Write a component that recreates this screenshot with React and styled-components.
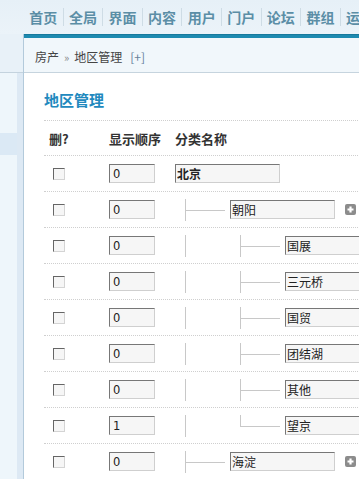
import React from 'react';
import styled, { createGlobalStyle } from 'styled-components';

const GlobalStyle = createGlobalStyle`
    html, body {
        margin: 0;
        padding: 0;
        background: #fff;
    }
    body {
        font-family: "Noto Sans CJK SC", "DejaVu Sans", sans-serif;
        font-size: 12px;
        color: #333;
        overflow: hidden;
    }
`;

const Page = styled.div`
    display: grid;
    grid-template-rows: 34px 1fr;
    min-height: 100vh;
`;

const Nav = styled.div`
    display: flex;
    align-items: center;
    padding-left: 24px;
    background: linear-gradient(#e6f0f7, #ebf3f9);
    white-space: nowrap;
    overflow: hidden;
`;

const NavItem = styled.a`
    flex: none;
    padding: 0 5.3px;
    font-size: 14px;
    font-weight: bold;
    line-height: 18px;
    color: #5b8ea6;
    text-decoration: none;
    & + & {
        border-left: 1px solid #cedce5;
    }
`;

const Body = styled.div`
    display: flex;
`;

const Sidebar = styled.div`
    width: 23px;
    flex: none;
    display: flex;
    flex-direction: column;
    border-right: 1px solid #b3cadb;
    background: #eef6fb;
`;

const SideHead = styled.div`
    height: 39px;
    box-sizing: border-box;
    background: #e8f1f8;
    border-bottom: 1px solid #c4d3de;
`;

const SideMenu = styled.div`
    flex: 1;
    display: flex;
`;

const SideList = styled.div`
    flex: 1;
    padding-top: 60px;
`;

const SideItem = styled.div`
    height: 22px;
    background: ${p => (p.$active ? '#dbe9f5' : 'transparent')};
`;

const SideStrip = styled.div`
    width: 6px;
    background: #dde9f4;
`;

const Main = styled.div`
    flex: 1;
    min-width: 0;
    display: flex;
    flex-direction: column;
`;

const TopBar = styled.div`
    height: 4px;
    background: #1d8ab0;
    border-top: 1px solid #17799c;
    box-sizing: border-box;
`;

const Crumbs = styled.div`
    height: 35px;
    box-sizing: border-box;
    padding: 3px 0 0 11px;
    display: flex;
    align-items: center;
    gap: 5px;
    background: #f1f7fb;
    border-bottom: 1px solid #c6d4de;
    color: #444;
    white-space: nowrap;
`;

const Raquo = styled.span`
    color: #888;
    font-size: 11px;
`;

const AddLink = styled.span`
    margin-left: 3px;
    color: #66819a;
`;

const Content = styled.div`
    padding-left: 20px;
`;

const Title = styled.h3`
    margin: 0;
    padding: 17px 0 10px;
    font-size: 15px;
    line-height: 20px;
    font-weight: bold;
    color: #2189be;
`;

const Row = styled.div`
    display: grid;
    grid-template-columns: 60px 66px 1fr;
    align-items: center;
    height: ${p => (p.$head ? 35 : 36)}px;
    box-sizing: border-box;
    padding-left: 5px;
    border-top: 1px dotted #cfcfcf;
`;

const HeadCell = styled.div`
    font-size: 13px;
    font-weight: bold;
    color: #333;
`;

const Check = styled.span`
    display: block;
    margin-left: 4px;
    width: 12px;
    height: 12px;
    box-sizing: border-box;
    border-top: 1px solid #666;
    border-left: 1px solid #666;
    border-right: 1px solid #d4d4d4;
    border-bottom: 1px solid #d4d4d4;
    background: #f6f6f6;
`;

const Field = styled.input`
    display: block;
    height: 19px;
    box-sizing: border-box;
    border: 1px solid;
    border-color: #777 #cfcfcf #cfcfcf #777;
    background: #f6f6f6;
    color: #222;
    outline: none;
    flex: none;
`;

const OrderField = styled(Field)`
    width: 46px;
    padding: 0 3px;
    font-family: "DejaVu Sans", sans-serif;
    font-size: 11.5px;
`;

const NameField = styled(Field)`
    width: 105px;
    padding: 0 1px;
    font-family: "Noto Sans CJK SC", sans-serif;
    font-size: 12px;
    font-weight: ${p => (p.$root ? 'bold' : 'normal')};
`;

const TreeCell = styled.div`
    display: flex;
    align-items: center;
    white-space: nowrap;
`;

const Lead = styled.span`
    width: 10px;
    flex: none;
`;

const Pipe = styled.span`
    width: 55px;
    height: 22px;
    flex: none;
    box-sizing: border-box;
    border-left: 1px solid #c8c8c8;
`;

const Connector = styled.span`
    width: 40px;
    height: 22px;
    flex: none;
    margin-right: 5px;
    background:
        linear-gradient(#c8c8c8, #c8c8c8) 0 0 / 1px ${p => (p.$last ? '12px' : '100%')} no-repeat,
        linear-gradient(#c8c8c8, #c8c8c8) 0 11px / 100% 1px no-repeat;
`;

const PlusIcon = styled.svg`
    flex: none;
    margin-left: 10px;
`;

const navItems = ['首页', '全局', '界面', '内容', '用户', '门户', '论坛', '群组', '运营'];

const rows = [
    { order: '0', name: '北京', level: 0 },
    { order: '0', name: '朝阳', level: 1, plus: true },
    { order: '0', name: '国展', level: 2 },
    { order: '0', name: '三元桥', level: 2 },
    { order: '0', name: '国贸', level: 2 },
    { order: '0', name: '团结湖', level: 2 },
    { order: '0', name: '其他', level: 2 },
    { order: '1', name: '望京', level: 2, last: true },
    { order: '0', name: '海淀', level: 1, plus: true },
];

const Plus = () => (
    <PlusIcon width="11" height="11" viewBox="0 0 11 11">
        <rect x="0" y="0" width="11" height="11" rx="2" fill="#8c8c8c" />
        <path d="M5.5 2.5v6M2.5 5.5h6" stroke="#fff" strokeWidth="2.2" />
    </PlusIcon>
);

const AreaRow = ({ row }) => (
    <Row>
        <Check role="checkbox" aria-checked="false" />
        <OrderField readOnly defaultValue={row.order} />
        <TreeCell>
            {row.level > 0 && <Lead />}
            {Array.from({ length: Math.max(row.level - 1, 0) }).map((_, i) => (
                <Pipe key={i} />
            ))}
            {row.level > 0 && <Connector $last={row.last} />}
            <NameField readOnly defaultValue={row.name} $root={row.level === 0} />
            {row.plus && <Plus />}
        </TreeCell>
    </Row>
);

const App = () => {
    return (
        <>
            <GlobalStyle />
            <Page>
                <Nav>
                    {navItems.map(item => (
                        <NavItem key={item}>{item}</NavItem>
                    ))}
                </Nav>
                <Body>
                    <Sidebar>
                        <SideHead />
                        <SideMenu>
                            <SideList>
                                <SideItem $active />
                            </SideList>
                            <SideStrip />
                        </SideMenu>
                    </Sidebar>
                    <Main>
                        <TopBar />
                        <Crumbs>
                            <span>房产</span>
                            <Raquo>»</Raquo>
                            <span>地区管理</span>
                            <AddLink>[+]</AddLink>
                        </Crumbs>
                        <Content>
                            <Title>地区管理</Title>
                            <Row $head>
                                <HeadCell>删?</HeadCell>
                                <HeadCell>显示顺序</HeadCell>
                                <HeadCell>分类名称</HeadCell>
                            </Row>
                            {rows.map((row, i) => (
                                <AreaRow key={i} row={row} />
                            ))}
                        </Content>
                    </Main>
                </Body>
            </Page>
        </>
    );
};

export default App;
